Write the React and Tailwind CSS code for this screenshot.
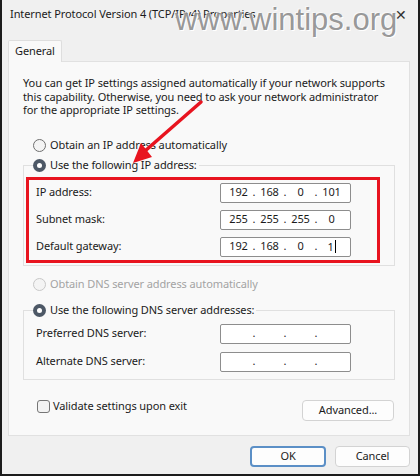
import { Fragment } from "react";

const FONT = "font-['Noto_Sans','Liberation_Sans',sans-serif]";

function Radio({ checked, disabled, label }) {
  return (
    <div className="flex h-[16px] items-center gap-[4px] whitespace-nowrap">
      {checked ? (
        <span className="flex h-[13px] w-[13px] items-center justify-center rounded-full bg-[#4d5866]">
          <span className="h-[5px] w-[5px] rounded-full bg-white" />
        </span>
      ) : (
        <span
          className={
            "h-[13px] w-[13px] rounded-full border bg-[#f4f4f4] " +
            (disabled ? "border-[#c8c8c8]" : "border-[#6f6f6f]")
          }
        />
      )}
      <span className={disabled ? "text-[#a3a3a3]" : "text-[#1b1b1b]"}>{label}</span>
    </div>
  );
}

function IpField({ parts = ["", "", "", ""], caret }) {
  return (
    <div className="flex h-[20px] w-[131px] items-center rounded-[2px] border border-[#8d8d8d] bg-white pl-[5px] text-[#1b1b1b]">
      {parts.map((p, i) => (
        <Fragment key={i}>
          <span className="w-[25px] text-center">
            {p}
            {caret && i === 3 && <span className="ml-[1px] inline-block h-[13px] w-[1px] translate-y-[2px] bg-black" />}
          </span>
          {i < 3 && <span className="w-[6px] text-center">.</span>}
        </Fragment>
      ))}
    </div>
  );
}

function Row({ label, children }) {
  return (
    <div className="grid grid-cols-[184px_131px] items-center">
      <span>{label}</span>
      {children}
    </div>
  );
}

function Button({ children, primary }) {
  return (
    <button
      className={
        "flex h-[21px] w-full items-center justify-center rounded-[4px] bg-[#fdfdfd] " +
        (primary ? "border-2 border-[#5b8fc6]" : "border border-[#d3d3d3]")
      }
    >
      {children}
    </button>
  );
}

export default function App() {
  return (
    <div className={`relative h-[476px] w-[420px] overflow-hidden bg-[#1c1c1c] px-[2px] pb-[2px] text-[11px] tracking-[-0.1px] ${FONT}`}>
      <div className="flex h-full flex-col bg-[#f0f0f0]">
        {/* title bar */}
        <div className="flex h-[40px] shrink-0 items-start justify-between pl-[8px] pr-[11px] pt-[6px]">
          <span className="whitespace-nowrap text-[11px] text-[#1b1b1b]">Internet Protocol Version 4 (TCP/IPv4) Properties</span>
          <span className="text-[14px] leading-[18px] text-[#333]">✕</span>
        </div>

        <div className="flex flex-col pl-[6px] pr-[8px]">
          {/* tab */}
          <div className="relative z-10 -mb-[1px] flex h-[22px] w-[54px] items-start rounded-t-[2px] border border-b-0 border-[#dedede] bg-[#f9f9f9] pl-[6px] pt-[2px] text-[#1b1b1b]">
            General
          </div>

          {/* panel */}
          <div className="flex flex-col border border-[#e1e1e1] bg-[#f9f9f9] px-[14px] pb-[14px] pt-[14px] text-[#1b1b1b]">
            <p className="whitespace-nowrap leading-[13.5px]">
              You can get IP settings assigned automatically if your network supports
              <br />
              this capability. Otherwise, you need to ask your network administrator
              <br />
              for the appropriate IP settings.
            </p>

            <div className="mt-[21px] pl-[10px]">
              <Radio label="Obtain an IP address automatically" />
            </div>

            <fieldset className="mt-[4px] border border-[#e0e0e0] pb-[2px] pr-[14px]">
              <legend className="ml-[9px] pr-[2px]">
                <Radio checked label="Use the following IP address:" />
              </legend>
              <div className="ml-[2px] mt-[3px] flex flex-col gap-[7px] border-[3px] border-[#e8141f] py-[3px] pl-[7px]">
                <Row label="IP address:">
                  <IpField parts={["192", "168", "0", "101"]} />
                </Row>
                <Row label="Subnet mask:">
                  <IpField parts={["255", "255", "255", "0"]} />
                </Row>
                <Row label="Default gateway:">
                  <IpField parts={["192", "168", "0", "1"]} caret />
                </Row>
              </div>
            </fieldset>

            <div className="mt-[11px] pl-[10px]">
              <Radio disabled label="Obtain DNS server address automatically" />
            </div>

            <fieldset className="mt-[10px] border border-[#e0e0e0] pb-[7px]">
              <legend className="ml-[9px] pr-[2px]">
                <Radio checked label="Use the following DNS server addresses:" />
              </legend>
              <div className="mt-[5px] flex flex-col gap-[8px] pl-[12px]">
                <Row label="Preferred DNS server:">
                  <IpField />
                </Row>
                <Row label="Alternate DNS server:">
                  <IpField />
                </Row>
              </div>
            </fieldset>

            <div className="mt-[20px] flex items-start justify-between pl-[14px] pr-[1px]">
              <div className="flex h-[13px] items-center gap-[3px] whitespace-nowrap">
                <span className="h-[13px] w-[13px] rounded-[3px] border border-[#767676] bg-[#f3f3f3]" />
                <span>Validate settings upon exit</span>
              </div>
              <div className="w-[92px]">
                <Button>Advanced...</Button>
              </div>
            </div>
          </div>

          {/* footer */}
          <div className="mt-[10px] flex justify-end gap-[9px] text-[#1b1b1b]">
            <div className="w-[76px]">
              <Button primary>OK</Button>
            </div>
            <div className="w-[75px]">
              <Button>Cancel</Button>
            </div>
          </div>
        </div>
      </div>

      {/* red arrow annotation */}
      <svg className="pointer-events-none absolute left-0 top-0" width="420" height="476">
        <line x1="201" y1="102" x2="145" y2="151" stroke="#e8141f" strokeWidth="3.5" strokeLinecap="round" />
        <polygon points="133,163 152,157 141,143" fill="#e8141f" />
      </svg>

      {/* watermark */}
      <div className="pointer-events-none absolute left-[175px] top-[4px] whitespace-nowrap font-['Liberation_Sans',sans-serif] text-[31px] leading-[31px] tracking-normal text-[rgba(125,125,125,0.8)] [text-shadow:1px_1px_0_#fff,-1px_-1px_0_rgba(255,255,255,0.6)]">
        www.wintips.org
      </div>
    </div>
  );
}
